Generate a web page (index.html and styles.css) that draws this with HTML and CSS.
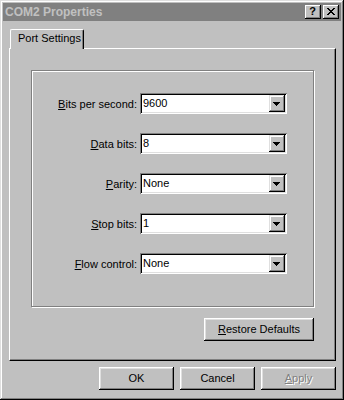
FILE: index.html
```html
<!DOCTYPE html>
<html>
<head>
<meta charset="utf-8">
<link rel="stylesheet" href="styles.css">
</head>
<body>
<div class="window">
  <div class="titlebar">
    <span class="title">COM2 Properties</span>
    <div class="tbtns">
      <div class="tbtn help">?</div>
      <div class="tbtn">
        <svg width="8" height="7" viewBox="0 0 8 7" shape-rendering="crispEdges">
          <path d="M0 0h2v1h-2zM6 0h2v1h-2zM1 1h2v1h-2zM5 1h2v1h-2zM2 2h4v1h-4zM3 3h2v1h-2zM2 4h4v1h-4zM1 5h2v1h-2zM5 5h2v1h-2zM0 6h2v1h-2zM6 6h2v1h-2z" fill="#000"/>
        </svg>
      </div>
    </div>
  </div>
  <div class="content">
    <div class="tabs">
      <div class="tab">Port Settings</div>
    </div>
    <div class="panel">
      <div class="group">
        <label class="lbl"><u>B</u>its per second:</label>
        <div class="combo"><span class="val">9600</span><span class="drop"><svg width="7" height="4" viewBox="0 0 7 4" shape-rendering="crispEdges"><path d="M0 0h7v1h-1v1h-1v1h-1v1h-1v-1h-1v-1h-1v-1h-1z" fill="#000"/></svg></span></div>

        <label class="lbl"><u>D</u>ata bits:</label>
        <div class="combo"><span class="val">8</span><span class="drop"><svg width="7" height="4" viewBox="0 0 7 4" shape-rendering="crispEdges"><path d="M0 0h7v1h-1v1h-1v1h-1v1h-1v-1h-1v-1h-1v-1h-1z" fill="#000"/></svg></span></div>

        <label class="lbl"><u>P</u>arity:</label>
        <div class="combo"><span class="val">None</span><span class="drop"><svg width="7" height="4" viewBox="0 0 7 4" shape-rendering="crispEdges"><path d="M0 0h7v1h-1v1h-1v1h-1v1h-1v-1h-1v-1h-1v-1h-1z" fill="#000"/></svg></span></div>

        <label class="lbl"><u>S</u>top bits:</label>
        <div class="combo"><span class="val">1</span><span class="drop"><svg width="7" height="4" viewBox="0 0 7 4" shape-rendering="crispEdges"><path d="M0 0h7v1h-1v1h-1v1h-1v1h-1v-1h-1v-1h-1v-1h-1z" fill="#000"/></svg></span></div>

        <label class="lbl"><u>F</u>low control:</label>
        <div class="combo"><span class="val">None</span><span class="drop"><svg width="7" height="4" viewBox="0 0 7 4" shape-rendering="crispEdges"><path d="M0 0h7v1h-1v1h-1v1h-1v1h-1v-1h-1v-1h-1v-1h-1z" fill="#000"/></svg></span></div>
      </div>
      <div class="restore-row">
        <div class="btn wide"><span><u>R</u>estore Defaults</span></div>
      </div>
    </div>
    <div class="actions">
      <div class="btn">OK</div>
      <div class="btn">Cancel</div>
      <div class="btn disabled"><span><u>A</u>pply</span></div>
    </div>
  </div>
</div>
</body>
</html>
```

FILE: styles.css
```css
* { box-sizing: border-box; }
body {
  margin: 0;
  font-family: "Liberation Sans", Arial, sans-serif;
  font-size: 11px;
  color: #000;
}
.window {
  width: 344px;
  height: 400px;
  background: #c0c0c0;
  padding: 3px;
  box-shadow: inset -1px -1px #000, inset 1px 1px #dfdfdf, inset -2px -2px #808080, inset 2px 2px #fff;
  display: flex;
  flex-direction: column;
}
.titlebar {
  height: 18px;
  background: #808080;
  display: flex;
  align-items: center;
  justify-content: space-between;
  padding: 0 2px 0 2px;
}
.title {
  color: #c0c0c0;
  font-weight: bold;
  font-size: 12px;
}
.tbtns {
  display: flex;
  gap: 2px;
}
.tbtn {
  width: 16px;
  height: 14px;
  background: #c0c0c0;
  box-shadow: inset -1px -1px #000, inset 1px 1px #fff, inset -2px -2px #808080;
  display: flex;
  align-items: center;
  justify-content: center;
  padding: 0 1px 1px 0;
}
.help {
  font-weight: bold;
  font-size: 11px;
  line-height: 1;
}
.content {
  padding: 8px 5px 0 6px;
}
.tabs {
  height: 19px;
  display: flex;
  padding-left: 1px;
}
.tab {
  position: relative;
  z-index: 1;
  width: 74px;
  height: 20px;
  background: #c0c0c0;
  border-top: 1px solid #fff;
  border-left: 1px solid #fff;
  border-right: 1px solid #000;
  border-radius: 2px 2px 0 0;
  box-shadow: inset -1px 0 #808080;
  padding: 2px 0 0 7px;
  line-height: 13px;
}
.panel {
  height: 313px;
  border: 1px solid;
  border-color: #fff #000 #000 #fff;
  box-shadow: inset -1px -1px #808080;
  padding: 21px 21px 0 21px;
}
.group {
  height: 237px;
  border: 1px solid #808080;
  box-shadow: 1px 1px 0 #fff, inset 1px 1px 0 #fff;
  padding-top: 22px;
  display: grid;
  grid-template-columns: 105px 147px;
  grid-auto-rows: 21px;
  column-gap: 3px;
  row-gap: 19px;
  align-content: start;
  align-items: center;
}
.lbl {
  justify-self: end;
  white-space: nowrap;
}
.combo {
  height: 21px;
  background: #fff;
  box-shadow: inset 1px 1px #808080, inset -1px -1px #fff, inset 2px 2px #000, inset -2px -2px #dfdfdf;
  display: flex;
  align-items: center;
  justify-content: space-between;
  padding: 2px;
}
.val {
  padding-left: 1px;
  line-height: 13px;
}
.drop {
  width: 16px;
  height: 17px;
  background: #c0c0c0;
  box-shadow: inset -1px -1px #000, inset 1px 1px #dfdfdf, inset -2px -2px #808080, inset 2px 2px #fff;
  display: flex;
  align-items: center;
  justify-content: center;
  padding-right: 1px;
}
.drop svg { display: block; }
.restore-row {
  display: flex;
  justify-content: flex-end;
  margin-top: 11px;
}
.btn {
  width: 75px;
  height: 23px;
  background: #c0c0c0;
  box-shadow: inset -1px -1px #000, inset 1px 1px #fff, inset -2px -2px #808080, inset 2px 2px #dfdfdf;
  display: flex;
  align-items: center;
  justify-content: center;
  padding-bottom: 1px;
}
.wide { width: 110px; }
.actions {
  display: flex;
  justify-content: flex-end;
  gap: 6px;
  margin-top: 6px;
}
.disabled {
  color: #808080;
  text-shadow: 1px 1px 0 #fff;
}
```
